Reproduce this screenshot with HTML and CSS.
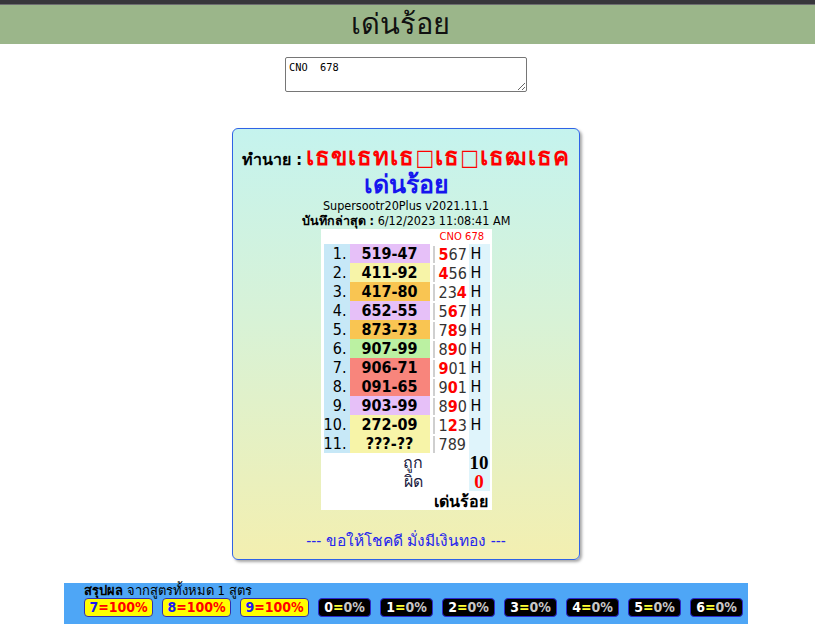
FILE: index.html
```html
<!DOCTYPE html>
<html lang="th">
<head>
<meta charset="utf-8">
<title>เด่นร้อย</title>
<link rel="stylesheet" href="styles.css">
</head>
<body>
<div class="topbar"></div>
<header class="head"><h1>เด่นร้อย</h1></header>
<main class="page">
  <div class="input-wrap"><textarea class="code">CNO  678</textarea></div>

  <section class="card">
    <div class="predict"><span class="lbl">ทำนาย :</span> <span class="moji">เธขเธทเธ<span class="tofu">□</span>เธ<span class="tofu">□</span>เธฒเธค</span></div>
    <div class="name">เด่นร้อย</div>
    <div class="ver">Supersootr20Plus v2021.11.1</div>
    <div class="saved"><b>บันทึกล่าสุด :</b> 6/12/2023 11:08:41 AM</div>

    <div class="tbl">
      <div class="cno">CNO 678</div>

      <div class="n">1.</div><div class="r purple">519-47</div><div class="d"><em>5</em>67</div><div class="h">H</div>
      <div class="n">2.</div><div class="r yellow">411-92</div><div class="d"><em>4</em>56</div><div class="h">H</div>
      <div class="n">3.</div><div class="r orange">417-80</div><div class="d">23<em>4</em></div><div class="h">H</div>
      <div class="n">4.</div><div class="r purple">652-55</div><div class="d">5<em>6</em>7</div><div class="h">H</div>
      <div class="n">5.</div><div class="r orange">873-73</div><div class="d">7<em>8</em>9</div><div class="h">H</div>
      <div class="n">6.</div><div class="r green">907-99</div><div class="d">8<em>9</em>0</div><div class="h">H</div>
      <div class="n">7.</div><div class="r salmon">906-71</div><div class="d"><em>9</em>01</div><div class="h">H</div>
      <div class="n">8.</div><div class="r salmon">091-65</div><div class="d">9<em>0</em>1</div><div class="h">H</div>
      <div class="n">9.</div><div class="r purple">903-99</div><div class="d">8<em>9</em>0</div><div class="h">H</div>
      <div class="n">10.</div><div class="r yellow">272-09</div><div class="d">1<em>2</em>3</div><div class="h">H</div>
      <div class="n">11.</div><div class="r yellow">???-??</div><div class="d">789</div><div class="h"></div>

      <div class="lab">ถูก</div><div class="h tot">10</div>
      <div class="lab">ผิด</div><div class="h tot bad">0</div>
      <div class="final">เด่นร้อย</div>
    </div>

    <div class="luck">--- ขอให้โชคดี มั่งมีเงินทอง ---</div>
  </section>

  <section class="summary">
    <div class="sum-title"><b>สรุปผล</b> จากสูตรทั้งหมด 1 สูตร</div>
    <div class="badges">
      <span class="badge hit"><i>7</i>=100%</span>
      <span class="badge hit"><i>8</i>=100%</span>
      <span class="badge hit"><i>9</i>=100%</span>
      <span class="badge miss"><i>0</i><s>=</s>0%</span>
      <span class="badge miss"><i>1</i><s>=</s>0%</span>
      <span class="badge miss"><i>2</i><s>=</s>0%</span>
      <span class="badge miss"><i>3</i><s>=</s>0%</span>
      <span class="badge miss"><i>4</i><s>=</s>0%</span>
      <span class="badge miss"><i>5</i><s>=</s>0%</span>
      <span class="badge miss"><i>6</i><s>=</s>0%</span>
    </div>
  </section>
</main>
</body>
</html>
```

FILE: styles.css
```css
html, body {
  margin: 0;
  padding: 0;
  background: #ffffff;
  font-family: "DejaVu Sans Condensed", "DejaVu Sans", sans-serif;
  color: #000;
}

.topbar {
  height: 4px;
  background: #37373b;
  border-bottom: 1px solid #6d6d70;
}

.head {
  background: #9bb68a;
  height: 39px;
  text-align: center;
  padding-right: 15px;
}

.head h1 {
  margin: 0;
  font-size: 29px;
  line-height: 39px;
  font-weight: normal;
  color: #111;
}

.page {
  width: 812px;
}

.input-wrap {
  text-align: center;
  padding-top: 13px;
  height: 35px;
}

.code {
  box-sizing: border-box;
  width: 242px;
  height: 35px;
  margin: 0;
  padding: 3px 3px;
  border: 1px solid #767676;
  border-radius: 2px;
  font-family: "DejaVu Sans Mono", monospace;
  font-size: 10.3px;
  line-height: 13px;
  resize: vertical;
  vertical-align: top;
}

.card {
  box-sizing: border-box;
  width: 348px;
  margin: 36px auto 0;
  padding: 13px 0 8px;
  border: 1px solid #2f63e6;
  border-radius: 6px;
  background: linear-gradient(to bottom, #c5f3ee 0%, #d8f2d6 45%, #f3efb0 100%);
  box-shadow: 2px 2px 3px rgba(0, 0, 0, 0.35);
  text-align: center;
}

.predict {
  height: 30px;
  line-height: 30px;
  white-space: nowrap;
}

.lbl {
  font-weight: bold;
  font-size: 16px;
}

.moji {
  color: #ff0000;
  font-weight: bold;
  font-size: 24px;
  letter-spacing: 1px;
}

.tofu {
  font-size: 22px;
  font-weight: normal;
}

.name {
  height: 26px;
  line-height: 26px;
  color: #1616ee;
  font-weight: bold;
  font-size: 25px;
}

.ver, .saved {
  height: 15px;
  line-height: 15px;
  font-size: 12.5px;
}

.saved {
  margin-bottom: 1px;
}

.tbl {
  display: grid;
  grid-template-columns: 26px 80px 39px 21px;
  grid-template-rows: 15px;
  grid-auto-rows: 19px;
  width: max-content;
  margin: 0 auto;
  padding: 0 2px 0 3px;
  background: #ffffff;
  font-size: 16px;
  line-height: 19px;
}

.cno {
  grid-column: 1 / 5;
  height: 15px;
  line-height: 15px;
  padding-left: 116px;
  text-align: left;
  font-size: 10px;
  color: #ff0000;
  font-family: "DejaVu Sans", sans-serif;
}

.n {
  background: #c7e8f7;
  text-align: right;
  padding-right: 3px;
}

.r {
  font-weight: bold;
  text-align: center;
}

.purple { background: #e6c0f8; }
.yellow { background: #f7f4a8; }
.orange { background: #f9c552; }
.green  { background: #bbf1a2; }
.salmon { background: #f8857c; }

.d {
  margin-left: 3px;
  margin-top: 2px;
  height: 17px;
  line-height: 17px;
  border-left: 2px solid #cfcfcf;
  padding-left: 4px;
  text-align: left;
  color: #333;
}

.d em {
  font-style: normal;
  font-weight: bold;
  color: #ff0000;
}

.h {
  background: #dff4fb;
  text-align: left;
  padding-left: 2px;
}

.lab {
  grid-column: 1 / 4;
  text-align: right;
  padding-right: 46px;
  color: #1a1a40;
}

.tot {
  font-family: "Liberation Serif", serif;
  font-weight: bold;
  font-size: 19px;
  line-height: 19px;
  padding-left: 0;
  text-align: center;
  overflow: hidden;
}

.bad { color: #ff0000; }

.final {
  grid-column: 1 / 5;
  height: 21px;
  line-height: 21px;
  text-align: right;
  padding-right: 2px;
  font-weight: bold;
}

.luck {
  margin-top: 21px;
  height: 20px;
  line-height: 20px;
  font-size: 15.5px;
  color: #2626ee;
}

.summary {
  box-sizing: border-box;
  width: 684px;
  margin: 23px auto 0;
  padding: 1px 0 7px 20px;
  background: #4ea6f6;
}

.sum-title {
  height: 14px;
  line-height: 14px;
  font-size: 13px;
  color: #000;
}

.badges {
  display: flex;
  gap: 9px;
}

.badge {
  box-sizing: border-box;
  height: 19px;
  line-height: 17px;
  border: 1px solid #2a2ad0;
  border-radius: 4px;
  font-weight: bold;
  font-size: 14px;
  white-space: nowrap;
  text-align: center;
}

.badge i, .badge s {
  font-style: normal;
  text-decoration: none;
}

.hit {
  width: 69px;
  background: #ffff00;
  color: #ff0000;
  border-color: #3030b0;
}

.hit i { color: #1a1af0; }

.miss {
  width: 53px;
  background: #000000;
  color: #c8c8c8;
}

.miss i { color: #ffffff; }
.miss s { color: #ffff33; }
```
